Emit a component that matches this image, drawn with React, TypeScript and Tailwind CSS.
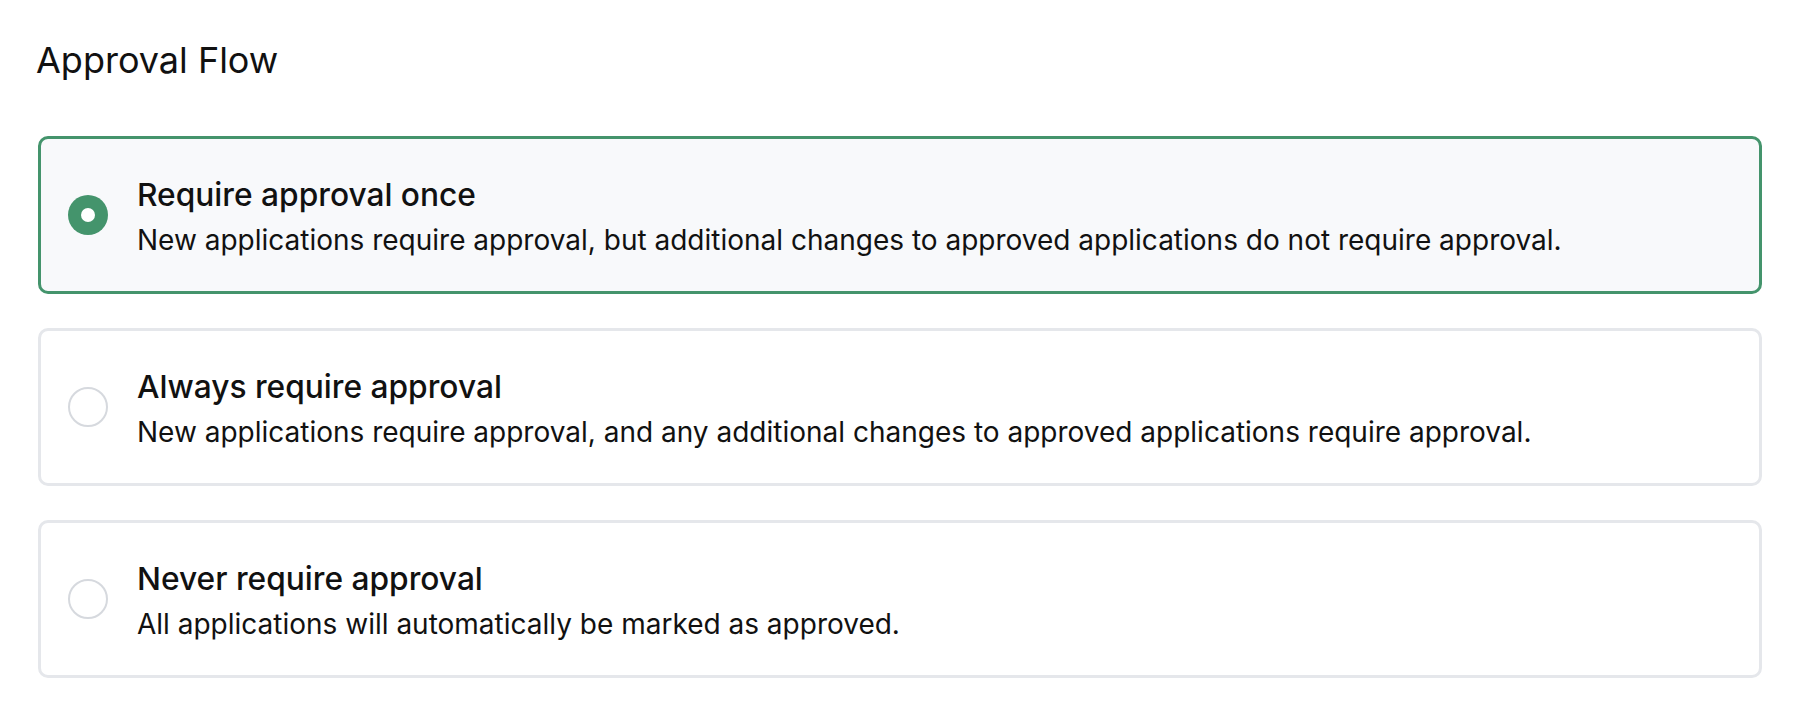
import React from "react";

type Option = { title: string; desc: string; selected?: boolean };

const options: Option[] = [
  {
    title: "Require approval once",
    desc: "New applications require approval, but additional changes to approved applications do not require approval.",
    selected: true,
  },
  {
    title: "Always require approval",
    desc: "New applications require approval, and any additional changes to approved applications require approval.",
  },
  {
    title: "Never require approval",
    desc: "All applications will automatically be marked as approved.",
  },
];

export default function App() {
  return (
    <div
      className="min-h-[720px] w-full bg-white px-[38px] pt-[40px] text-[#111111]"
      style={{ fontFamily: "Inter, 'Noto Sans', sans-serif" }}
    >
      <h1 className="ml-[-2px] text-[36px] leading-[40px] font-normal">Approval Flow</h1>
      <div className="mt-[56px] flex flex-col gap-[34px]">
        {options.map((o) => (
          <div
            key={o.title}
            className={
              o.selected
                ? "flex h-[158px] items-center gap-[29px] rounded-[10px] border-[3px] border-[#44946c] bg-[#f8f9fb] pl-[27px]"
                : "flex h-[158px] items-center gap-[29px] rounded-[10px] border-[3px] border-[#e5e7eb] bg-white pl-[27px]"
            }
          >
            {o.selected ? (
              <div className="flex h-[40px] w-[40px] shrink-0 items-center justify-center rounded-full bg-[#44946c]">
                <div className="h-[14px] w-[14px] rounded-full bg-white" />
              </div>
            ) : (
              <div className="h-[40px] w-[40px] shrink-0 rounded-full border-2 border-[#d6d9de] bg-white" />
            )}
            <div className="flex flex-col pt-[3px]">
              <div className="text-[31.7px] leading-[40px] font-medium">{o.title}</div>
              <div className="mt-[7px] text-[28px] leading-[36px] font-normal">{o.desc}</div>
            </div>
          </div>
        ))}
      </div>
    </div>
  );
}
